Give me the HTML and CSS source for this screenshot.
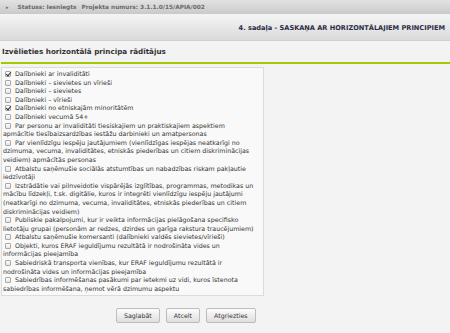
FILE: index.html
```html
<!DOCTYPE html>
<html lang="lv">
<head>
    <meta charset="UTF-8">
    <meta name="viewport" content="width=device-width, initial-scale=1.0">
    <title>4. sadaļa - Saskaņa ar horizontālajiem principiem</title>
    <link rel="stylesheet" href="styles.css">
</head>
<body>
    <div class="status-bar">
        <span class="arrow">&#9656;</span>
        <span>Statuss: Iesniegts</span>
        <span class="project">Projekta numurs: 3.1.1.0/15/APIA/002</span>
    </div>

    <div class="section-head">4. sadaļa - SASKAŅA AR HORIZONTĀLAJIEM PRINCIPIEM</div>

    <div class="content">
        <h2 class="title">Izvēlieties horizontālā principa rādītājus</h2>

        <div class="choice-box">
            <div class="choice"><span class="cb checked"></span>Dalībnieki ar invaliditāti</div>
            <div class="choice"><span class="cb"></span>Dalībnieki – sievietes un vīrieši</div>
            <div class="choice"><span class="cb"></span>Dalībnieki – sievietes</div>
            <div class="choice"><span class="cb"></span>Dalībnieki – vīrieši</div>
            <div class="choice"><span class="cb checked"></span>Dalībnieki no etniskajām minoritātēm</div>
            <div class="choice"><span class="cb"></span>Dalībnieki vecumā 54+</div>
            <div class="choice"><span class="cb"></span>Par personu ar invaliditāti tiesiskajiem un praktiskajiem aspektiem apmācītie tiesībaizsardzības iestāžu darbinieki un amatpersonas</div>
            <div class="choice"><span class="cb"></span>Par vienlīdzīgu iespēju jautājumiem (vienlīdzīgas iespējas neatkarīgi no dzimuma, vecuma, invaliditātes, etniskās piederības un citiem diskriminācijas veidiem) apmācītās personas</div>
            <div class="choice"><span class="cb"></span>Atbalstu saņēmušie sociālās atstumtības un nabadzības riskam pakļautie iedzīvotāji</div>
            <div class="choice"><span class="cb"></span>Izstrādātie vai pilnveidotie vispārējās izglītības, programmas, metodikas un mācību līdzekļi, t.sk. digitālie, kuros ir integrēti vienlīdzīgu iespēju jautājumi (neatkarīgi no dzimuma, vecuma, invaliditātes, etniskās piederības un citiem diskriminācijas veidiem)</div>
            <div class="choice"><span class="cb"></span>Publiskie pakalpojumi, kur ir veikta informācijas pielāgošana specifisko lietotāju grupai (personām ar redzes, dzirdes un garīga rakstura traucējumiem)</div>
            <div class="choice"><span class="cb"></span>Atbalstu saņēmušie komersanti (dalībnieki valdēs sievietes/vīrieši)</div>
            <div class="choice"><span class="cb"></span>Objekti, kuros ERAF ieguldījumu rezultātā ir nodrošināta vides un informācijas pieejamība</div>
            <div class="choice"><span class="cb"></span>Sabiedriskā transporta vienības, kur ERAF ieguldījumu rezultātā ir nodrošināta vides un informācijas pieejamība</div>
            <div class="choice"><span class="cb"></span>Sabiedrības informēšanas pasākumi par ietekmi uz vidi, kuros īstenota sabiedrības informēšana, ņemot vērā dzimumu aspektu</div>
        </div>

        <div class="actions">
            <button class="btn">Saglabāt</button>
            <button class="btn">Atcelt</button>
            <button class="btn">Atgriezties</button>
        </div>
    </div>
</body>
</html>
```

FILE: styles.css
```css
* {
    margin: 0;
    padding: 0;
    box-sizing: border-box;
}
body {
    width: 450px;
    height: 333px;
    overflow: hidden;
    background: #f3f3f3;
    font-family: "DejaVu Sans", Verdana, sans-serif;
    color: #333;
}

/* statusa josla */
.status-bar {
    height: 14px;
    display: flex;
    align-items: center;
    gap: 5px;
    padding-left: 6px;
    background: linear-gradient(#e2e2e2, #c9c9c9);
    font-size: 5.8px;
    font-weight: bold;
    color: #6a6a6a;
}
.status-bar .arrow {
    font-size: 5px;
    margin-right: 4px;
}

/* sadaļas virsraksts */
.section-head {
    height: 26px;
    margin-top: 1px;
    display: flex;
    align-items: center;
    justify-content: flex-end;
    padding-right: 5px;
    background: linear-gradient(#f4f4f4, #dadada);
    border-bottom: 1px solid #d0d0d0;
    font-size: 6.6px;
    font-weight: bold;
    color: #2b2b45;
}

.content {
    padding-left: 1px;
}
.title {
    margin-top: 6px;
    padding: 0 0 6px 1px;
    font-size: 7.2px;
    font-weight: bold;
    color: #333;
    border-bottom: 2px solid #a6c800;
}

.choice-box {
    width: 263px;
    margin-top: 3px;
    padding: 2px 7px 2px 1px;
    background: #f9f9f9;
    border: 1px solid #dcdcdc;
    font-size: 6.3px;
    line-height: 8.6px;
    color: #333;
}
.cb {
    display: inline-block;
    width: 6px;
    height: 6px;
    margin: 0 4px 0 2px;
    vertical-align: -1px;
    border: 1px solid #a9a9a9;
    border-radius: 1px;
    background: linear-gradient(#fff, #e4e4e4);
    position: relative;
}
.cb.checked::after {
    content: "";
    position: absolute;
    left: 1px;
    top: -1px;
    width: 2px;
    height: 4px;
    border: solid #333;
    border-width: 0 1px 1px 0;
    transform: rotate(40deg);
}

.actions {
    display: flex;
    gap: 6px;
    margin: 12px 0 0 115px;
}
.btn {
    height: 15px;
    padding: 0 7px;
    font-family: "DejaVu Sans", Verdana, sans-serif;
    font-size: 6.3px;
    color: #333;
    background: linear-gradient(#fdfdfd, #dedede);
    border: 1px solid #bdbdbd;
    border-radius: 2px;
}
```
